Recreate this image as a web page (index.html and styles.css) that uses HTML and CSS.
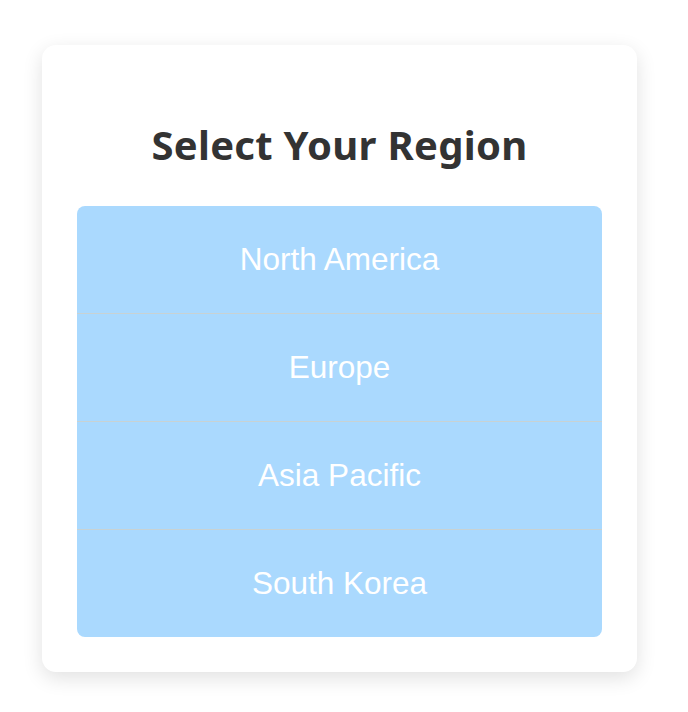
FILE: index.html
```html
<!DOCTYPE html>
<html lang="en">
<head>
  <meta charset="UTF-8" />
  <meta name="viewport" content="width=device-width, initial-scale=1.0" />
  <title>Select Your Region</title>
  <link rel="stylesheet" href="styles.css">
</head>
<body>
  <div class="card">
    <h2>Select Your Region</h2>
    <ul class="region-list">
      <li class="region">North America</li>
      <li class="region">Europe</li>
      <li class="region">Asia Pacific</li>
      <li class="region">South Korea</li>
    </ul>
  </div>
</body>
</html>
```

FILE: styles.css
```css
body {
  font-family: 'Noto Sans', sans-serif;
  background-color: #fff;
  color: #333;
  margin: 0;
  padding: 45px 0 40px 42px;
}

.card {
  background-color: white;
  width: 595px;
  box-sizing: border-box;
  padding: 35px;
  border-radius: 14px;
  box-shadow: 0 6px 20px rgba(0, 0, 0, 0.12);
}

h2 {
  text-align: center;
  font-size: 40px;
  font-weight: bold;
  letter-spacing: 0.3px;
  color: #333;
  margin: 39px 0 35px;
  line-height: 52px;
}

.region-list {
  list-style: none;
  margin: 0;
  padding: 0;
  background-color: #aad9fe;
  border-radius: 8px;
  overflow: hidden;
}

.region {
  font-family: 'Liberation Sans', Arial, sans-serif;
  font-size: 31.5px;
  color: white;
  text-align: center;
  height: 107px;
  line-height: 107px;
  border-bottom: 1px solid #c8d2d3;
}

.region:last-child {
  border-bottom: none;
}
```
